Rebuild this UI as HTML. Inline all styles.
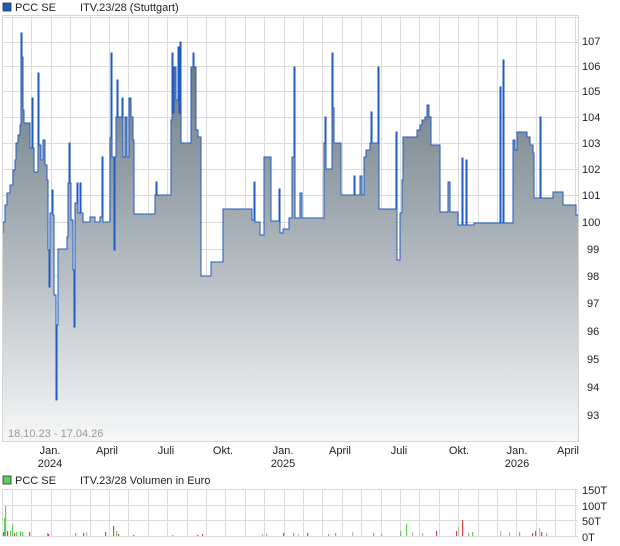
<!DOCTYPE html>
<html><head><meta charset="utf-8"><style>
html,body{margin:0;padding:0;background:#fff;width:620px;height:546px;overflow:hidden}
svg{display:block;font-family:"Liberation Sans",sans-serif}
</style></head><body>
<svg id="s" width="620" height="546" viewBox="0 0 620 546">
<defs>
<linearGradient id="g" gradientUnits="userSpaceOnUse" x1="0" y1="40" x2="0" y2="441">
<stop offset="0" stop-color="#65747c"/><stop offset="0.45" stop-color="#a3adb3"/><stop offset="1" stop-color="#f6f7f8"/>
</linearGradient>
</defs>
<rect x="3" y="3" width="8" height="8" fill="#1f5bc4" stroke="#333" stroke-width="0.8"/>
<text x="15" y="11" font-size="11" fill="#222">PCC SE</text>
<text x="80" y="11" font-size="11" fill="#222">ITV.23/28 (Stuttgart)</text>
<g id="grid" stroke="#dcdcdc" stroke-width="1"></g>
<path id="fill" fill="url(#g)"/>
<path id="line" fill="none" stroke="#1f5bc4" stroke-width="1"/>
<rect x="2.5" y="15.5" width="576" height="426" fill="none" stroke="#d6d6d6"/>
<text x="8" y="437" font-size="11" fill="#9a9a9a">18.10.23 - 17.04.26</text>
<g font-size="11" fill="#222">
<text x="582" y="45">107</text><text x="582" y="70">106</text><text x="582" y="95">105</text>
<text x="582" y="121">104</text><text x="582" y="147">103</text><text x="582" y="173">102</text>
<text x="582" y="199">101</text><text x="582" y="226">100</text><text x="587" y="253">99</text>
<text x="587" y="280">98</text><text x="587" y="307">97</text><text x="587" y="335">96</text>
<text x="587" y="363">95</text><text x="587" y="391">94</text><text x="587" y="419">93</text>
</g>
<g font-size="11" fill="#222" text-anchor="middle">
<text x="50" y="454">Jan.</text><text x="50" y="467">2024</text>
<text x="107" y="454">April</text><text x="166" y="454">Juli</text><text x="223" y="454">Okt.</text>
<text x="283" y="454">Jan.</text><text x="283" y="467">2025</text>
<text x="340" y="454">April</text><text x="399" y="454">Juli</text><text x="459" y="454">Okt.</text>
<text x="517" y="454">Jan.</text><text x="517" y="467">2026</text>
<text x="568" y="454">April</text>
</g>
<rect x="3" y="476" width="8" height="8" fill="#5ecf5e" stroke="#333" stroke-width="0.8"/>
<text x="15" y="484" font-size="11" fill="#222">PCC SE</text>
<text x="80" y="484" font-size="11" fill="#222">ITV.23/28 Volumen in Euro</text>
<g id="vgrid" stroke="#dcdcdc" stroke-width="1"></g>
<g id="vbars"></g>
<g font-size="11" fill="#222">
<text x="582" y="494">150T</text><text x="582" y="510">100T</text><text x="582" y="525">50T</text><text x="582" y="541">0T</text>
</g>
</svg>
<script>
var d=[2,233,3,222,5,205,7,193,10,185,13,170,15,160,16,143,18,135,20,125,21,33,22,57,23,110,24,123,30,148,32,98,33,148,34,172,38,73,39,145,41,160,43,140,45,165,47,180,48,250,49,287,50,213,52,190,53,215,54,295,56,400,57,325,58,249,67,237,68,183,69,143,70,183,71,220,73,270,74,327,75,203,77,183,78,213,80,183,81,213,83,222,90,217,95,222,100,217,102,157,103,222,110,138,111,53,112,157,114,250,115,157,116,117,117,80,118,117,122,98,123,157,125,117,127,157,129,98,131,117,133,140,134,214,155,195,156,182,157,195,171,120,172,53,173,113,174,67,176,100,178,47,179,113,180,42,181,143,191,67,193,53,194,67,196,130,198,137,201,276,211,262,223,209,252,220,254,182,255,222,260,235,264,157,271,221,279,189,280,233,283,229,289,218,292,157,294,67,295,218,300,193,302,218,307,218,324,143,325,117,326,169,332,53,333,108,334,143,341,195,354,176,355,195,360,176,362,195,364,157,366,150,370,143,371,112,372,143,378,67,379,209,396,132,397,260,400,213,402,180,403,137,417,130,420,125,422,120,425,117,427,105,429,117,431,145,440,212,448,182,450,212,458,225,462,158,463,225,466,160,467,225,474,223,500,87,501,223,503,60,504,223,512,223,513,140,515,150,517,132,527,137,530,145,533,153,534,198,540,117,541,198,553,192,563,205,576,215,578,215];
var p="M"+d[0]+" "+d[1];
for(var i=2;i<d.length;i+=2){p+=" H"+d[i]+" V"+d[i+1];}
document.getElementById("line").setAttribute("d",p);
document.getElementById("fill").setAttribute("d",p+" V441 H2 Z");
var g=document.getElementById("grid"),vg=document.getElementById("vgrid"),h="";
var ys=[17,42,66,91,117,143,169,195,222,249,276,303,331,359,387,415];
for(var k=0;k<ys.length;k++)h+='<line x1="2" x2="578" y1="'+(ys[k]+.5)+'" y2="'+(ys[k]+.5)+'"/>';
var vh="";
for(var x=12;x<578;x+=19.4){var xx=Math.round(x)+.5;h+='<line x1="'+xx+'" x2="'+xx+'" y1="15" y2="441"/>';vh+='<line x1="'+xx+'" x2="'+xx+'" y1="489" y2="536"/>';}
[489,505,520,536].forEach(function(y){vh+='<line x1="2" x2="578" y1="'+(y+.5)+'" y2="'+(y+.5)+'"/>';});
vh+='<line x1="2.5" x2="2.5" y1="489" y2="536"/>';
g.innerHTML=h;vg.innerHTML=vh;
var b=[[4,518,'#5ecf5e'],[5,506,'#5ecf5e'],[3,532,'#d44'],[7,531,'#d44'],[10,531,'#5ecf5e'],[12,524,'#5ecf5e'],[14,533,'#d44'],[16,532,'#5ecf5e'],[20,531,'#5ecf5e'],[22,532,'#5ecf5e'],[29,532,'#d44'],[47,533,'#5ecf5e'],[48,534,'#d44'],[75,533,'#5ecf5e'],[83,533,'#d44'],[86,532,'#bbb'],[105,532,'#d44'],[113,526,'#d44'],[116,531,'#5ecf5e'],[118,534,'#d44'],[133,535,'#d44'],[172,535,'#5ecf5e'],[197,535,'#d44'],[202,534,'#d44'],[262,534,'#bbb'],[266,533,'#bbb'],[283,533,'#d44'],[293,533,'#5ecf5e'],[298,534,'#bbb'],[307,533,'#d44'],[328,534,'#5ecf5e'],[335,533,'#5ecf5e'],[352,532,'#bbb'],[373,533,'#5ecf5e'],[381,534,'#5ecf5e'],[400,531,'#5ecf5e'],[406,524,'#5ecf5e'],[412,532,'#bbb'],[422,533,'#bbb'],[436,531,'#d44'],[456,531,'#d44'],[458,527,'#bbb'],[462,520,'#d44'],[468,533,'#5ecf5e'],[472,532,'#5ecf5e'],[500,531,'#bbb'],[509,532,'#bbb'],[519,532,'#5ecf5e'],[532,533,'#d44'],[535,531,'#d44'],[539,528,'#bbb'],[541,532,'#d44'],[546,533,'#5ecf5e']];
var bh="";b.forEach(function(e){bh+='<rect x="'+e[0]+'" y="'+e[1]+'" width="1.2" height="'+(536-e[1])+'" fill="'+e[2]+'"/>';});
document.getElementById("vbars").innerHTML=bh;
</script>
</body></html>
